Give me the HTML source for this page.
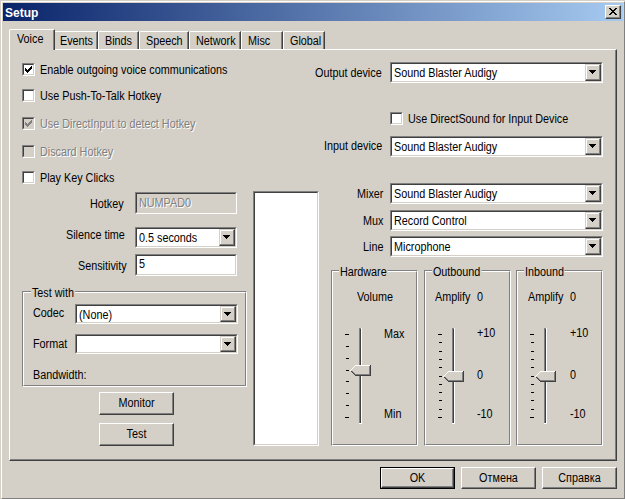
<!DOCTYPE html>
<html><head><meta charset="utf-8"><style>
*{box-sizing:border-box;margin:0;padding:0}
html,body{width:625px;height:499px;overflow:hidden;background:#D4D0C8}
body{position:relative;font-family:"Liberation Sans",sans-serif;font-size:11px;color:#000}
.a{position:absolute}
.t{position:absolute;white-space:nowrap;line-height:13px;font-size:12px;transform:scaleX(0.9);transform-origin:0 0}
.tc{transform-origin:50% 0}
.dis{color:#808080;text-shadow:1px 1px 0 #fff}
#frame{left:0;top:0;width:626px;height:500px;border-top:1px solid #D4D0C8;border-left:1px solid #D4D0C8;border-right:1px solid #404040;border-bottom:1px solid #404040}
#frame2{left:1px;top:1px;width:624px;height:498px;border-top:1px solid #fff;border-left:1px solid #fff;border-right:1px solid #808080;border-bottom:1px solid #808080}
#title{left:3px;top:3px;width:620px;height:18px;background:linear-gradient(to right,#0A246A,#A6CAF0)}
#title span{position:absolute;left:2px;top:4px;color:#fff;font-weight:bold;font-size:12px;line-height:13px}
.raised{position:absolute;border-top:1px solid #fff;border-left:1px solid #fff;border-right:1px solid #404040;border-bottom:1px solid #404040;background:#D4D0C8}
.raised::after{content:"";position:absolute;left:0;top:0;right:0;bottom:0;border-right:1px solid #808080;border-bottom:1px solid #808080}
.sunk{position:absolute;border-top:1px solid #808080;border-left:1px solid #808080;border-right:1px solid #fff;border-bottom:1px solid #fff;background:#fff}
.sunk::before{content:"";position:absolute;left:0;top:0;right:0;bottom:0;border-top:1px solid #404040;border-left:1px solid #404040;border-right:1px solid #D4D0C8;border-bottom:1px solid #D4D0C8}
.sunk>.raised{position:absolute;border-top-color:#D4D0C8;border-left-color:#D4D0C8}
.sunk>.raised::before{content:"";position:absolute;left:0;top:0;right:0;bottom:0;border-top:1px solid #fff;border-left:1px solid #fff}
.cb{position:absolute;width:13px;height:13px;border-top:1px solid #808080;border-left:1px solid #808080;border-right:1px solid #fff;border-bottom:1px solid #fff;background:#fff}
.cb::before{content:"";position:absolute;left:0;top:0;width:11px;height:11px;border-top:1px solid #404040;border-left:1px solid #404040;border-right:1px solid #D4D0C8;border-bottom:1px solid #D4D0C8;box-sizing:border-box}
.cb.g{background:#D4D0C8}
.grp{position:absolute;border-top:1px solid #808080;border-left:1px solid #808080;border-right:1px solid #fff;border-bottom:1px solid #fff}
.grp::before{content:"";position:absolute;left:0;top:0;right:0;bottom:0;border-top:1px solid #fff;border-left:1px solid #fff;border-right:1px solid #808080;border-bottom:1px solid #808080}
.gl{position:absolute;background:#D4D0C8;padding:0 1px;line-height:13px;white-space:nowrap;font-size:12px;transform:scaleX(0.9);transform-origin:0 0}
.tab{position:absolute;top:31px;height:18px;border-top:1px solid #fff;border-left:1px solid #fff;border-right:1px solid #404040;border-top-left-radius:2px}
.tab::after{content:"";position:absolute;top:0;right:0;bottom:0;border-right:1px solid #808080}
.tab span{position:absolute;top:3px;white-space:nowrap;line-height:13px;font-size:12px;transform:scaleX(0.9);transform-origin:0 0}
</style></head><body>
<div class="a" id="frame"></div><div class="a" id="frame2"></div>
<div class="a" id="title"><span>Setup</span></div>
<div class="raised" style="left:605px;top:5px;width:16px;height:14px"><svg class="a" style="left:3px;top:2px" width="8" height="7" viewBox="0 0 8 7" shape-rendering="crispEdges"><path d="M0 0h2v1h-2zM6 0h2v1h-2zM1 1h2v1h-2zM5 1h2v1h-2zM2 2h4v1h-4zM3 3h2v1h-2zM2 4h4v1h-4zM1 5h2v1h-2zM5 5h2v1h-2zM0 6h2v1h-2zM6 6h2v1h-2z" fill="#000"/></svg></div>
<div class="a" style="left:9px;top:49px;width:608px;height:412px;border-top:1px solid #fff;border-left:1px solid #fff;border-right:1px solid #404040;border-bottom:1px solid #404040"></div>
<div class="a" style="left:10px;top:50px;width:606px;height:410px;border-right:1px solid #808080;border-bottom:1px solid #808080"></div>
<div class="tab" style="left:53px;width:45px"><span style="left:6px">Events</span></div>
<div class="tab" style="left:98px;width:41px"><span style="left:6px">Binds</span></div>
<div class="tab" style="left:139px;width:50px"><span style="left:6px">Speech</span></div>
<div class="tab" style="left:189px;width:52px"><span style="left:6px">Network</span></div>
<div class="tab" style="left:241px;width:42px"><span style="left:6px">Misc</span></div>
<div class="tab" style="left:283px;width:42px"><span style="left:6px">Global</span></div>
<div class="tab" style="left:9px;top:29px;width:46px;height:21px;background:#D4D0C8;border-top-right-radius:1px"><span style="left:7px;top:3px">Voice</span></div>
<div class="cb" style="left:22px;top:63px"><svg class="a" style="left:2px;top:2px" width="7" height="7" viewBox="0 0 7 7" shape-rendering="crispEdges"><path d="M6 0h1v1h-1zM5 1h2v1h-2zM0 2h1v1h-1zM4 2h3v1h-3zM0 3h2v1h-2zM3 3h3v1h-3zM0 4h5v1h-5zM1 5h3v1h-3zM2 6h1v1h-1z" fill="#000"/></svg></div>
<div class="t" style="left:40px;top:64px;">Enable outgoing voice communications</div>
<div class="cb" style="left:22px;top:89px"></div>
<div class="t" style="left:40px;top:90px;">Use Push-To-Talk Hotkey</div>
<div class="cb g" style="left:22px;top:117px"><svg class="a" style="left:2px;top:2px" width="7" height="7" viewBox="0 0 7 7" shape-rendering="crispEdges"><path d="M6 0h1v1h-1zM5 1h2v1h-2zM0 2h1v1h-1zM4 2h3v1h-3zM0 3h2v1h-2zM3 3h3v1h-3zM0 4h5v1h-5zM1 5h3v1h-3zM2 6h1v1h-1z" fill="#808080"/></svg></div>
<div class="t dis" style="left:40px;top:118px;">Use DirectInput to detect Hotkey</div>
<div class="cb g" style="left:22px;top:145px"></div>
<div class="t dis" style="left:40px;top:146px;">Discard Hotkey</div>
<div class="cb" style="left:22px;top:171px"></div>
<div class="t" style="left:40px;top:172px;">Play Key Clicks</div>
<div class="t" style="left:90px;top:198px;">Hotkey</div>
<div class="sunk" style="left:135px;top:192px;width:102px;height:22px;background:#D4D0C8"></div>
<div class="t dis" style="left:139px;top:197px;">NUMPAD0</div>
<div class="t" style="left:66px;top:229px;">Silence time</div>
<div class="sunk" style="left:135px;top:227px;width:102px;height:21px;background:#fff"><div class="raised" style="left:83px;top:1px;width:16px;height:17px"><svg class="a" style="left:3px;top:5px" width="7" height="4" viewBox="0 0 7 4" shape-rendering="crispEdges"><path d="M0 0h7v1h-7zM1 1h5v1h-5zM2 2h3v1h-3zM3 3h1v1h-1z" fill="#000"/></svg></div></div>
<div class="t" style="left:139px;top:232px;">0.5 seconds</div>
<div class="t" style="left:78px;top:260px;">Sensitivity</div>
<div class="sunk" style="left:135px;top:254px;width:102px;height:22px;background:#fff"></div>
<div class="t" style="left:139px;top:258px;">5</div>
<div class="grp" style="left:22px;top:291px;width:225px;height:96px"></div>
<div class="gl" style="left:31px;top:287px">Test with</div>
<div class="t" style="left:33px;top:307px;">Codec</div>
<div class="sunk" style="left:75px;top:304px;width:163px;height:20px;background:#fff"><div class="raised" style="left:144px;top:1px;width:16px;height:16px"><svg class="a" style="left:3px;top:5px" width="7" height="4" viewBox="0 0 7 4" shape-rendering="crispEdges"><path d="M0 0h7v1h-7zM1 1h5v1h-5zM2 2h3v1h-3zM3 3h1v1h-1z" fill="#000"/></svg></div></div>
<div class="t" style="left:79px;top:309px;">(None)</div>
<div class="t" style="left:33px;top:338px;">Format</div>
<div class="sunk" style="left:75px;top:334px;width:163px;height:20px;background:#fff"><div class="raised" style="left:144px;top:1px;width:16px;height:16px"><svg class="a" style="left:3px;top:5px" width="7" height="4" viewBox="0 0 7 4" shape-rendering="crispEdges"><path d="M0 0h7v1h-7zM1 1h5v1h-5zM2 2h3v1h-3zM3 3h1v1h-1z" fill="#000"/></svg></div></div>
<div class="t" style="left:33px;top:369px;">Bandwidth:</div>
<div class="raised" style="left:99px;top:392px;width:75px;height:23px"><div class="t tc" style="left:0;right:0;top:4px;text-align:center">Monitor</div></div>
<div class="raised" style="left:99px;top:423px;width:75px;height:23px"><div class="t tc" style="left:0;right:0;top:4px;text-align:center">Test</div></div>
<div class="sunk" style="left:253px;top:191px;width:66px;height:255px;background:#fff"></div>
<div class="t" style="left:315px;top:67px;">Output device</div>
<div class="sunk" style="left:390px;top:62px;width:213px;height:21px;background:#fff"><div class="raised" style="left:194px;top:1px;width:16px;height:17px"><svg class="a" style="left:3px;top:5px" width="7" height="4" viewBox="0 0 7 4" shape-rendering="crispEdges"><path d="M0 0h7v1h-7zM1 1h5v1h-5zM2 2h3v1h-3zM3 3h1v1h-1z" fill="#000"/></svg></div></div>
<div class="t" style="left:394px;top:67px;">Sound Blaster Audigy</div>
<div class="cb" style="left:390px;top:112px"></div>
<div class="t" style="left:408px;top:113px;">Use DirectSound for Input Device</div>
<div class="t" style="left:324px;top:140px;">Input device</div>
<div class="sunk" style="left:390px;top:136px;width:213px;height:21px;background:#fff"><div class="raised" style="left:194px;top:1px;width:16px;height:17px"><svg class="a" style="left:3px;top:5px" width="7" height="4" viewBox="0 0 7 4" shape-rendering="crispEdges"><path d="M0 0h7v1h-7zM1 1h5v1h-5zM2 2h3v1h-3zM3 3h1v1h-1z" fill="#000"/></svg></div></div>
<div class="t" style="left:394px;top:141px;">Sound Blaster Audigy</div>
<div class="t" style="left:357px;top:188px;">Mixer</div>
<div class="sunk" style="left:390px;top:183px;width:213px;height:21px;background:#fff"><div class="raised" style="left:194px;top:1px;width:16px;height:17px"><svg class="a" style="left:3px;top:5px" width="7" height="4" viewBox="0 0 7 4" shape-rendering="crispEdges"><path d="M0 0h7v1h-7zM1 1h5v1h-5zM2 2h3v1h-3zM3 3h1v1h-1z" fill="#000"/></svg></div></div>
<div class="t" style="left:394px;top:188px;">Sound Blaster Audigy</div>
<div class="t" style="left:363px;top:215px;">Mux</div>
<div class="sunk" style="left:390px;top:210px;width:213px;height:21px;background:#fff"><div class="raised" style="left:194px;top:1px;width:16px;height:17px"><svg class="a" style="left:3px;top:5px" width="7" height="4" viewBox="0 0 7 4" shape-rendering="crispEdges"><path d="M0 0h7v1h-7zM1 1h5v1h-5zM2 2h3v1h-3zM3 3h1v1h-1z" fill="#000"/></svg></div></div>
<div class="t" style="left:394px;top:215px;">Record Control</div>
<div class="t" style="left:363px;top:241px;">Line</div>
<div class="sunk" style="left:390px;top:236px;width:213px;height:21px;background:#fff"><div class="raised" style="left:194px;top:1px;width:16px;height:17px"><svg class="a" style="left:3px;top:5px" width="7" height="4" viewBox="0 0 7 4" shape-rendering="crispEdges"><path d="M0 0h7v1h-7zM1 1h5v1h-5zM2 2h3v1h-3zM3 3h1v1h-1z" fill="#000"/></svg></div></div>
<div class="t" style="left:394px;top:241px;">Microphone</div>
<div class="grp" style="left:331px;top:270px;width:87px;height:176px"></div>
<div class="gl" style="left:339px;top:266px">Hardware</div>
<div class="t" style="left:357px;top:291px;">Volume</div>
<div class="t" style="left:384px;top:328px;">Max</div>
<div class="t" style="left:384px;top:408px;">Min</div>
<div class="grp" style="left:424px;top:270px;width:87px;height:176px"></div>
<div class="gl" style="left:432px;top:266px">Outbound</div>
<div class="t" style="left:435px;top:291px;">Amplify</div>
<div class="t" style="left:477px;top:291px;">0</div>
<div class="t" style="left:477px;top:327px;">+10</div>
<div class="t" style="left:477px;top:369px;">0</div>
<div class="t" style="left:477px;top:408px;">-10</div>
<div class="grp" style="left:516px;top:270px;width:87px;height:176px"></div>
<div class="gl" style="left:524px;top:266px">Inbound</div>
<div class="t" style="left:528px;top:291px;">Amplify</div>
<div class="t" style="left:570px;top:291px;">0</div>
<div class="t" style="left:570px;top:327px;">+10</div>
<div class="t" style="left:570px;top:369px;">0</div>
<div class="t" style="left:570px;top:408px;">-10</div>
<div class="a" style="left:359px;top:328px;width:1px;height:96px;background:#808080"></div>
<div class="a" style="left:360px;top:329px;width:1px;height:94px;background:#404040"></div>
<div class="a" style="left:361px;top:328px;width:1px;height:96px;background:#fff"></div>
<div class="a" style="left:359px;top:423px;width:3px;height:1px;background:#fff"></div>
<div class="a" style="left:359px;top:328px;width:2px;height:1px;background:#808080"></div>
<div class="a" style="left:345px;top:334px;width:4px;height:1px;background:#000"></div>
<div class="a" style="left:346px;top:346px;width:3px;height:1px;background:#000"></div>
<div class="a" style="left:346px;top:358px;width:3px;height:1px;background:#000"></div>
<div class="a" style="left:346px;top:370px;width:3px;height:1px;background:#000"></div>
<div class="a" style="left:346px;top:381px;width:3px;height:1px;background:#000"></div>
<div class="a" style="left:346px;top:393px;width:3px;height:1px;background:#000"></div>
<div class="a" style="left:346px;top:405px;width:3px;height:1px;background:#000"></div>
<div class="a" style="left:345px;top:417px;width:4px;height:1px;background:#000"></div>
<svg class="a" style="left:350px;top:365px" width="21" height="11" shape-rendering="crispEdges"><rect x="5" y="0" width="16" height="1" fill="#D4D0C8"/><rect x="4" y="1" width="17" height="1" fill="#D4D0C8"/><rect x="3" y="2" width="18" height="1" fill="#D4D0C8"/><rect x="2" y="3" width="19" height="1" fill="#D4D0C8"/><rect x="1" y="4" width="20" height="1" fill="#D4D0C8"/><rect x="0" y="5" width="21" height="1" fill="#D4D0C8"/><rect x="1" y="6" width="20" height="1" fill="#D4D0C8"/><rect x="2" y="7" width="19" height="1" fill="#D4D0C8"/><rect x="3" y="8" width="18" height="1" fill="#D4D0C8"/><rect x="4" y="9" width="17" height="1" fill="#D4D0C8"/><rect x="5" y="10" width="16" height="1" fill="#D4D0C8"/><rect x="5" y="0" width="15" height="1" fill="#fff"/><rect x="4" y="1" width="1" height="1" fill="#fff"/><rect x="3" y="2" width="1" height="1" fill="#fff"/><rect x="2" y="3" width="1" height="1" fill="#fff"/><rect x="1" y="4" width="1" height="1" fill="#fff"/><rect x="0" y="5" width="1" height="1" fill="#fff"/><rect x="20" y="0" width="1" height="11" fill="#404040"/><rect x="5" y="10" width="16" height="1" fill="#404040"/><rect x="1" y="6" width="1" height="1" fill="#404040"/><rect x="2" y="7" width="1" height="1" fill="#404040"/><rect x="3" y="8" width="1" height="1" fill="#404040"/><rect x="4" y="9" width="1" height="1" fill="#404040"/><rect x="19" y="1" width="1" height="9" fill="#808080"/><rect x="5" y="9" width="15" height="1" fill="#808080"/><rect x="2" y="6" width="1" height="1" fill="#808080"/><rect x="3" y="7" width="1" height="1" fill="#808080"/><rect x="4" y="8" width="1" height="1" fill="#808080"/></svg>
<div class="a" style="left:452px;top:328px;width:1px;height:96px;background:#808080"></div>
<div class="a" style="left:453px;top:329px;width:1px;height:94px;background:#404040"></div>
<div class="a" style="left:454px;top:328px;width:1px;height:96px;background:#fff"></div>
<div class="a" style="left:452px;top:423px;width:3px;height:1px;background:#fff"></div>
<div class="a" style="left:452px;top:328px;width:2px;height:1px;background:#808080"></div>
<div class="a" style="left:438px;top:334px;width:4px;height:1px;background:#000"></div>
<div class="a" style="left:439px;top:342px;width:3px;height:1px;background:#000"></div>
<div class="a" style="left:439px;top:351px;width:3px;height:1px;background:#000"></div>
<div class="a" style="left:439px;top:359px;width:3px;height:1px;background:#000"></div>
<div class="a" style="left:439px;top:367px;width:3px;height:1px;background:#000"></div>
<div class="a" style="left:439px;top:376px;width:3px;height:1px;background:#000"></div>
<div class="a" style="left:439px;top:384px;width:3px;height:1px;background:#000"></div>
<div class="a" style="left:439px;top:392px;width:3px;height:1px;background:#000"></div>
<div class="a" style="left:439px;top:400px;width:3px;height:1px;background:#000"></div>
<div class="a" style="left:439px;top:409px;width:3px;height:1px;background:#000"></div>
<div class="a" style="left:438px;top:417px;width:4px;height:1px;background:#000"></div>
<svg class="a" style="left:443px;top:371px" width="21" height="11" shape-rendering="crispEdges"><rect x="5" y="0" width="16" height="1" fill="#D4D0C8"/><rect x="4" y="1" width="17" height="1" fill="#D4D0C8"/><rect x="3" y="2" width="18" height="1" fill="#D4D0C8"/><rect x="2" y="3" width="19" height="1" fill="#D4D0C8"/><rect x="1" y="4" width="20" height="1" fill="#D4D0C8"/><rect x="0" y="5" width="21" height="1" fill="#D4D0C8"/><rect x="1" y="6" width="20" height="1" fill="#D4D0C8"/><rect x="2" y="7" width="19" height="1" fill="#D4D0C8"/><rect x="3" y="8" width="18" height="1" fill="#D4D0C8"/><rect x="4" y="9" width="17" height="1" fill="#D4D0C8"/><rect x="5" y="10" width="16" height="1" fill="#D4D0C8"/><rect x="5" y="0" width="15" height="1" fill="#fff"/><rect x="4" y="1" width="1" height="1" fill="#fff"/><rect x="3" y="2" width="1" height="1" fill="#fff"/><rect x="2" y="3" width="1" height="1" fill="#fff"/><rect x="1" y="4" width="1" height="1" fill="#fff"/><rect x="0" y="5" width="1" height="1" fill="#fff"/><rect x="20" y="0" width="1" height="11" fill="#404040"/><rect x="5" y="10" width="16" height="1" fill="#404040"/><rect x="1" y="6" width="1" height="1" fill="#404040"/><rect x="2" y="7" width="1" height="1" fill="#404040"/><rect x="3" y="8" width="1" height="1" fill="#404040"/><rect x="4" y="9" width="1" height="1" fill="#404040"/><rect x="19" y="1" width="1" height="9" fill="#808080"/><rect x="5" y="9" width="15" height="1" fill="#808080"/><rect x="2" y="6" width="1" height="1" fill="#808080"/><rect x="3" y="7" width="1" height="1" fill="#808080"/><rect x="4" y="8" width="1" height="1" fill="#808080"/></svg>
<div class="a" style="left:544px;top:328px;width:1px;height:96px;background:#808080"></div>
<div class="a" style="left:545px;top:329px;width:1px;height:94px;background:#404040"></div>
<div class="a" style="left:546px;top:328px;width:1px;height:96px;background:#fff"></div>
<div class="a" style="left:544px;top:423px;width:3px;height:1px;background:#fff"></div>
<div class="a" style="left:544px;top:328px;width:2px;height:1px;background:#808080"></div>
<div class="a" style="left:530px;top:334px;width:4px;height:1px;background:#000"></div>
<div class="a" style="left:531px;top:342px;width:3px;height:1px;background:#000"></div>
<div class="a" style="left:531px;top:351px;width:3px;height:1px;background:#000"></div>
<div class="a" style="left:531px;top:359px;width:3px;height:1px;background:#000"></div>
<div class="a" style="left:531px;top:367px;width:3px;height:1px;background:#000"></div>
<div class="a" style="left:531px;top:376px;width:3px;height:1px;background:#000"></div>
<div class="a" style="left:531px;top:384px;width:3px;height:1px;background:#000"></div>
<div class="a" style="left:531px;top:392px;width:3px;height:1px;background:#000"></div>
<div class="a" style="left:531px;top:400px;width:3px;height:1px;background:#000"></div>
<div class="a" style="left:531px;top:409px;width:3px;height:1px;background:#000"></div>
<div class="a" style="left:530px;top:417px;width:4px;height:1px;background:#000"></div>
<svg class="a" style="left:535px;top:371px" width="21" height="11" shape-rendering="crispEdges"><rect x="5" y="0" width="16" height="1" fill="#D4D0C8"/><rect x="4" y="1" width="17" height="1" fill="#D4D0C8"/><rect x="3" y="2" width="18" height="1" fill="#D4D0C8"/><rect x="2" y="3" width="19" height="1" fill="#D4D0C8"/><rect x="1" y="4" width="20" height="1" fill="#D4D0C8"/><rect x="0" y="5" width="21" height="1" fill="#D4D0C8"/><rect x="1" y="6" width="20" height="1" fill="#D4D0C8"/><rect x="2" y="7" width="19" height="1" fill="#D4D0C8"/><rect x="3" y="8" width="18" height="1" fill="#D4D0C8"/><rect x="4" y="9" width="17" height="1" fill="#D4D0C8"/><rect x="5" y="10" width="16" height="1" fill="#D4D0C8"/><rect x="5" y="0" width="15" height="1" fill="#fff"/><rect x="4" y="1" width="1" height="1" fill="#fff"/><rect x="3" y="2" width="1" height="1" fill="#fff"/><rect x="2" y="3" width="1" height="1" fill="#fff"/><rect x="1" y="4" width="1" height="1" fill="#fff"/><rect x="0" y="5" width="1" height="1" fill="#fff"/><rect x="20" y="0" width="1" height="11" fill="#404040"/><rect x="5" y="10" width="16" height="1" fill="#404040"/><rect x="1" y="6" width="1" height="1" fill="#404040"/><rect x="2" y="7" width="1" height="1" fill="#404040"/><rect x="3" y="8" width="1" height="1" fill="#404040"/><rect x="4" y="9" width="1" height="1" fill="#404040"/><rect x="19" y="1" width="1" height="9" fill="#808080"/><rect x="5" y="9" width="15" height="1" fill="#808080"/><rect x="2" y="6" width="1" height="1" fill="#808080"/><rect x="3" y="7" width="1" height="1" fill="#808080"/><rect x="4" y="8" width="1" height="1" fill="#808080"/></svg>
<div class="a" style="left:380px;top:467px;width:75px;height:22px;border:1px solid #000"><div class="raised" style="left:0;top:0;width:73px;height:20px"><div class="t tc" style="left:0;right:0;top:3px;text-align:center">OK</div></div></div>
<div class="raised" style="left:461px;top:467px;width:75px;height:22px"><div class="t tc" style="left:0;right:0;top:4px;text-align:center">Отмена</div></div>
<div class="raised" style="left:542px;top:467px;width:75px;height:22px"><div class="t tc" style="left:0;right:0;top:4px;text-align:center">Справка</div></div>
</body></html>
